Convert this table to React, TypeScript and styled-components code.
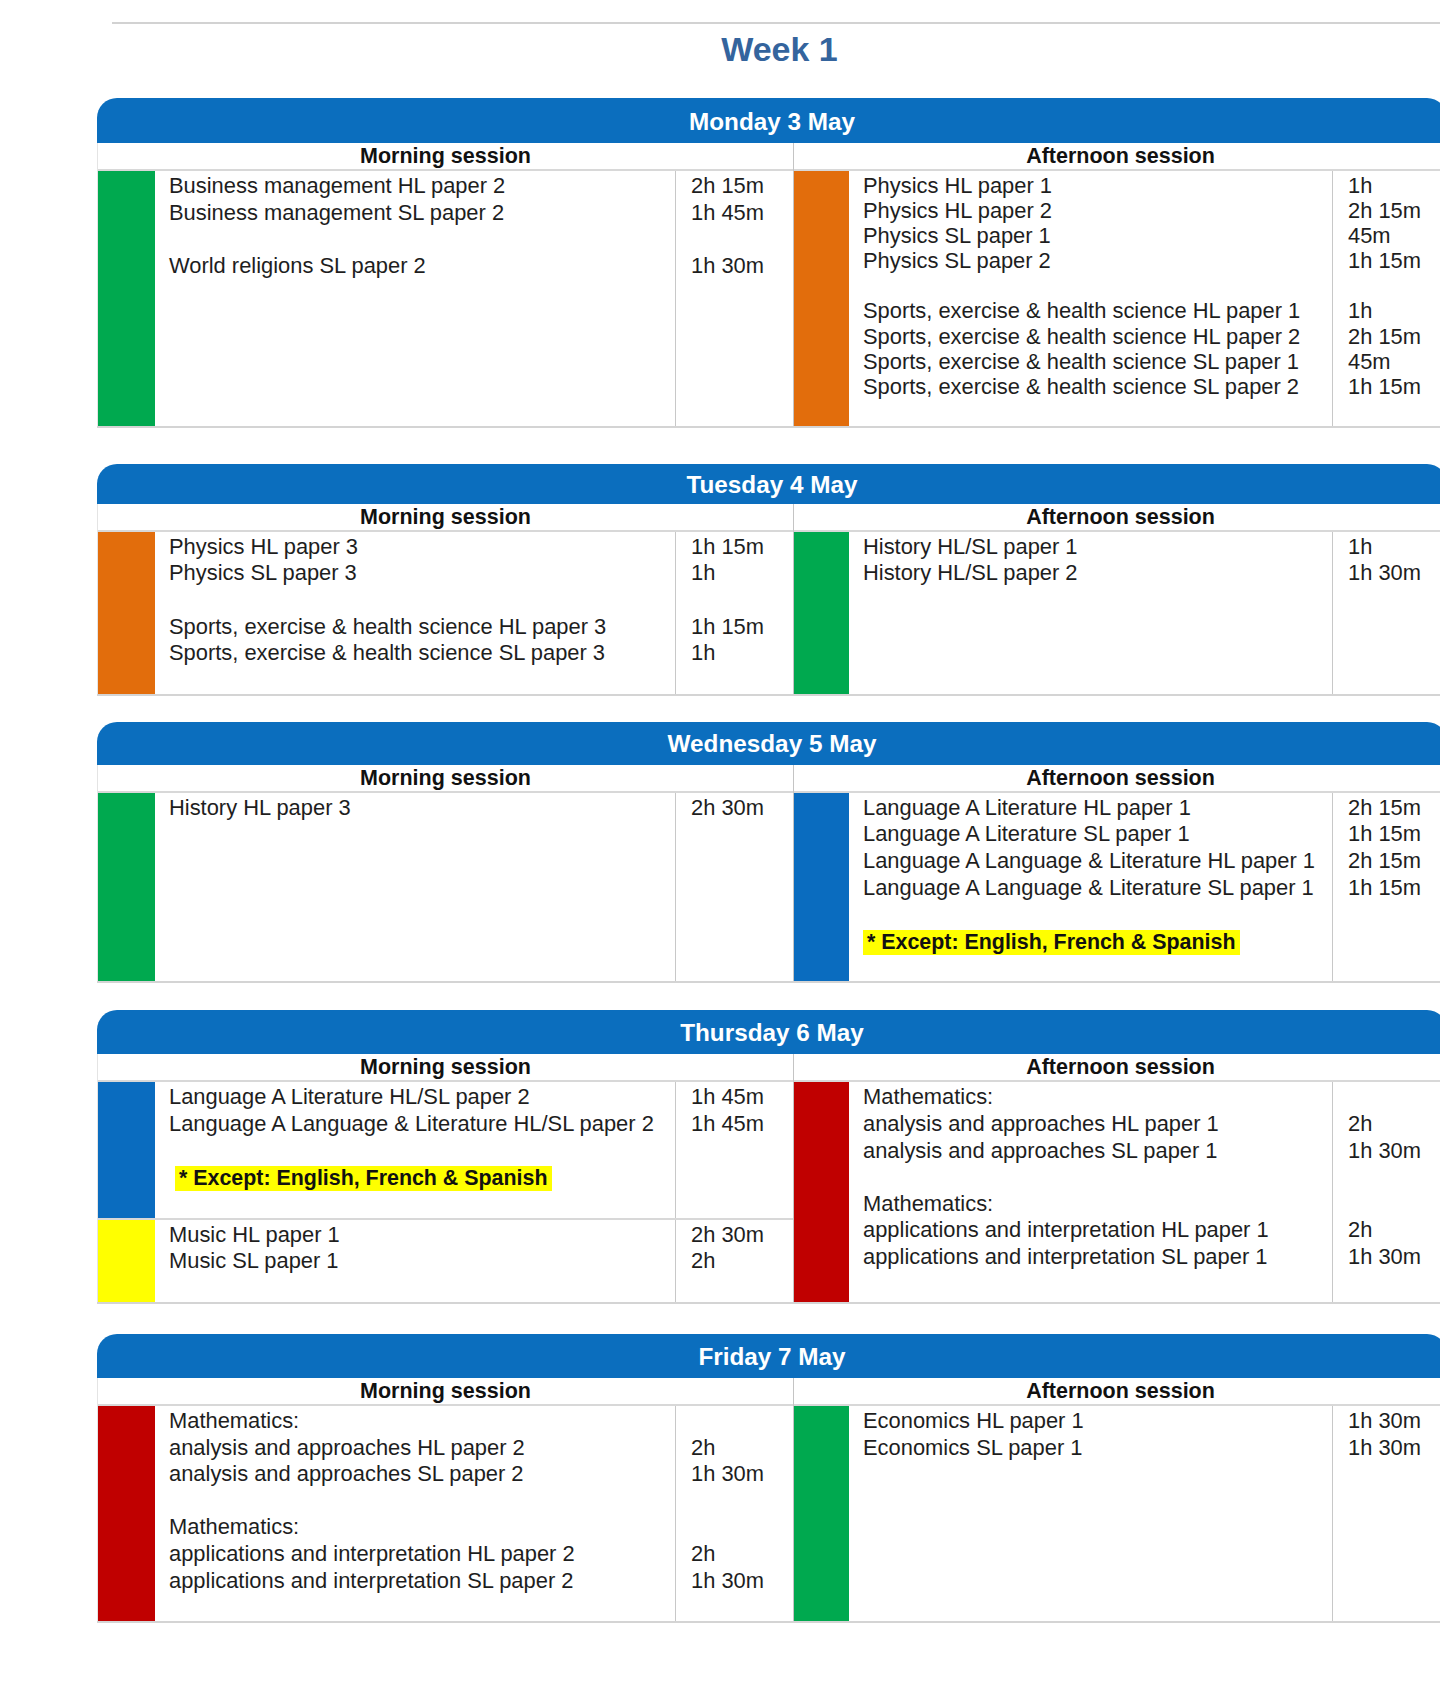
import styled, { createGlobalStyle } from "styled-components";

const GlobalStyle = createGlobalStyle`
  *, *::before, *::after {
    box-sizing: border-box;
  }
  html, body {
    margin: 0;
    padding: 0;
    background: #fff;
    overflow-x: hidden;
  }
  body {
    font-family: "Liberation Sans", Arial, Helvetica, sans-serif;
    color: #1e1e1e;
  }
`;

const LINE = 26.6;

const Page = styled.div`
  width: 1440px;
  overflow: hidden;
  padding: 22px 0 80px;
`;

const TitleBlock = styled.header`
  margin-left: 112px;
  width: 1335px;
  border-top: 2px solid #d2d2d2;
`;

const Title = styled.h1`
  margin: 5px 0 0;
  height: 41px;
  line-height: 40px;
  text-align: center;
  font-size: 34px;
  font-weight: 700;
  color: #34649d;
`;

const Day = styled.section<{ $space: number }>`
  width: 1350px;
  margin: ${(p) => p.$space}px 0 0 97px;
`;

const DayHeader = styled.div<{ $height: number }>`
  height: ${(p) => p.$height}px;
  padding-top: 2px;
  background: #0b6ebe;
  border-radius: 20px 20px 0 0;
  color: #fff;
  font-size: 24.3px;
  font-weight: 700;
  display: flex;
  align-items: center;
  justify-content: center;
`;

const Halves = styled.div`
  display: grid;
  grid-template-columns: 696px 654px;
  border-bottom: 2px solid #d4d4d4;
`;

const Half = styled.div<{ $right?: boolean }>`
  display: flex;
  flex-direction: column;
  border-left: 1px solid ${(p) => (p.$right ? "#c4c4c4" : "#e4e4e4")};
`;

const SessionHead = styled.div`
  box-sizing: content-box;
  height: 25px;
  padding-top: 1px;
  line-height: 25px;
  text-align: center;
  font-size: 21.5px;
  font-weight: 700;
  color: #111;
  border-bottom: 2px solid #d8d8d8;
`;

const Block = styled.div<{ $bar: number; $name: number; $fill?: boolean }>`
  display: grid;
  grid-template-columns: ${(p) => p.$bar}px ${(p) => p.$name}px 1fr;
  flex: ${(p) => (p.$fill ? "1 1 auto" : "0 0 auto")};

  & + & {
    border-top: 2px solid #d8d8d8;
  }
`;

const Bar = styled.div<{ $color: string }>`
  background: ${(p) => p.$color};
`;

const NameCol = styled.div`
  padding: 1px 0 28px 14px;
`;

const DurCol = styled.div`
  border-left: 1.5px solid #c8c8c8;
  padding: 1px 0 28px 15px;
`;

const Line = styled.div<{ $lh: number }>`
  height: ${(p) => p.$lh}px;
  line-height: ${(p) => p.$lh + 2}px;
  font-size: 21.9px;
  white-space: nowrap;
`;

const Note = styled.span<{ $indent: number }>`
  display: inline-block;
  margin-left: ${(p) => p.$indent}px;
  padding: 0 5px 0 4px;
  line-height: 25px;
  vertical-align: middle;
  background: #ffff00;
  font-weight: 700;
  font-size: 21.4px;
  color: #111;
`;

type Row = { name?: string; dur?: string; note?: number } | null;

interface Exam {
  color: string;
  rows: Row[];
}

interface DayData {
  title: string;
  space: number;
  head?: number;
  am: Exam[];
  pm: Exam[];
  amLine?: number;
  pmLine?: number;
}

const GREEN = "#00a94f";
const ORANGE = "#e26d0c";
const BLUE = "#0a6cbf";
const RED = "#c00000";
const YELLOW = "#ffff00";

const NOTE = "* Except: English, French & Spanish";

const days: DayData[] = [
  {
    title: "Monday 3 May",
    space: 28,
    head: 45,
    pmLine: 25.1,
    am: [
      {
        color: GREEN,
        rows: [
          { name: "Business management HL paper 2", dur: "2h 15m" },
          { name: "Business management SL paper 2", dur: "1h 45m" },
          null,
          { name: "World religions SL paper 2", dur: "1h 30m" },
        ],
      },
    ],
    pm: [
      {
        color: ORANGE,
        rows: [
          { name: "Physics HL paper 1", dur: "1h" },
          { name: "Physics HL paper 2", dur: "2h 15m" },
          { name: "Physics SL paper 1", dur: "45m" },
          { name: "Physics SL paper 2", dur: "1h 15m" },
          null,
          { name: "Sports, exercise & health science HL paper 1", dur: "1h" },
          { name: "Sports, exercise & health science HL paper 2", dur: "2h 15m" },
          { name: "Sports, exercise & health science SL paper 1", dur: "45m" },
          { name: "Sports, exercise & health science SL paper 2", dur: "1h 15m" },
        ],
      },
    ],
  },
  {
    title: "Tuesday 4 May",
    space: 36,
    head: 40,
    am: [
      {
        color: ORANGE,
        rows: [
          { name: "Physics HL paper 3", dur: "1h 15m" },
          { name: "Physics SL paper 3", dur: "1h" },
          null,
          { name: "Sports, exercise & health science HL paper 3", dur: "1h 15m" },
          { name: "Sports, exercise & health science SL paper 3", dur: "1h" },
        ],
      },
    ],
    pm: [
      {
        color: GREEN,
        rows: [
          { name: "History HL/SL paper 1", dur: "1h" },
          { name: "History HL/SL paper 2", dur: "1h 30m" },
        ],
      },
    ],
  },
  {
    title: "Wednesday 5 May",
    space: 26,
    head: 43,
    am: [
      {
        color: GREEN,
        rows: [{ name: "History HL paper 3", dur: "2h 30m" }],
      },
    ],
    pm: [
      {
        color: BLUE,
        rows: [
          { name: "Language A Literature HL paper 1", dur: "2h 15m" },
          { name: "Language A Literature SL paper 1", dur: "1h 15m" },
          { name: "Language A Language & Literature HL paper 1", dur: "2h 15m" },
          { name: "Language A Language & Literature SL paper 1", dur: "1h 15m" },
          null,
          { note: 0 },
        ],
      },
    ],
  },
  {
    title: "Thursday 6 May",
    space: 27,
    am: [
      {
        color: BLUE,
        rows: [
          { name: "Language A Literature HL/SL paper 2", dur: "1h 45m" },
          { name: "Language A Language & Literature HL/SL paper 2", dur: "1h 45m" },
          null,
          { note: 6 },
        ],
      },
      {
        color: YELLOW,
        rows: [
          { name: "Music HL paper 1", dur: "2h 30m" },
          { name: "Music SL paper 1", dur: "2h" },
        ],
      },
    ],
    pm: [
      {
        color: RED,
        rows: [
          { name: "Mathematics:" },
          { name: "analysis and approaches HL paper 1", dur: "2h" },
          { name: "analysis and approaches SL paper 1", dur: "1h 30m" },
          null,
          { name: "Mathematics:" },
          { name: "applications and interpretation HL paper 1", dur: "2h" },
          { name: "applications and interpretation SL paper 1", dur: "1h 30m" },
        ],
      },
    ],
  },
  {
    title: "Friday 7 May",
    space: 30,
    am: [
      {
        color: RED,
        rows: [
          { name: "Mathematics:" },
          { name: "analysis and approaches HL paper 2", dur: "2h" },
          { name: "analysis and approaches SL paper 2", dur: "1h 30m" },
          null,
          { name: "Mathematics:" },
          { name: "applications and interpretation HL paper 2", dur: "2h" },
          { name: "applications and interpretation SL paper 2", dur: "1h 30m" },
        ],
      },
    ],
    pm: [
      {
        color: GREEN,
        rows: [
          { name: "Economics HL paper 1", dur: "1h 30m" },
          { name: "Economics SL paper 1", dur: "1h 30m" },
        ],
      },
    ],
  },
];

function Session({
  label,
  exams,
  bar,
  name,
  lh,
  right,
}: {
  label: string;
  exams: Exam[];
  bar: number;
  name: number;
  lh: number;
  right?: boolean;
}) {
  return (
    <Half $right={right}>
      <SessionHead>{label}</SessionHead>
      {exams.map((exam, i) => (
        <Block key={i} $bar={bar} $name={name} $fill={i === exams.length - 1}>
          <Bar $color={exam.color} />
          <NameCol>
            {exam.rows.map((row, j) => (
              <Line key={j} $lh={lh}>
                {row?.note !== undefined ? (
                  <Note $indent={row.note}>{NOTE}</Note>
                ) : (
                  row?.name ?? ""
                )}
              </Line>
            ))}
          </NameCol>
          <DurCol>
            {exam.rows.map((row, j) => (
              <Line key={j} $lh={lh}>
                {row?.dur ?? ""}
              </Line>
            ))}
          </DurCol>
        </Block>
      ))}
    </Half>
  );
}

export default function App() {
  return (
    <Page>
      <GlobalStyle />
      <TitleBlock>
        <Title>Week 1</Title>
      </TitleBlock>
      {days.map((day) => (
        <Day key={day.title} $space={day.space}>
          <DayHeader $height={day.head ?? 44}>{day.title}</DayHeader>
          <Halves>
            <Session
              label="Morning session"
              exams={day.am}
              bar={57}
              name={520}
              lh={day.amLine ?? LINE}
            />
            <Session
              label="Afternoon session"
              exams={day.pm}
              bar={55}
              name={483}
              lh={day.pmLine ?? LINE}
              right
            />
          </Halves>
        </Day>
      ))}
    </Page>
  );
}
